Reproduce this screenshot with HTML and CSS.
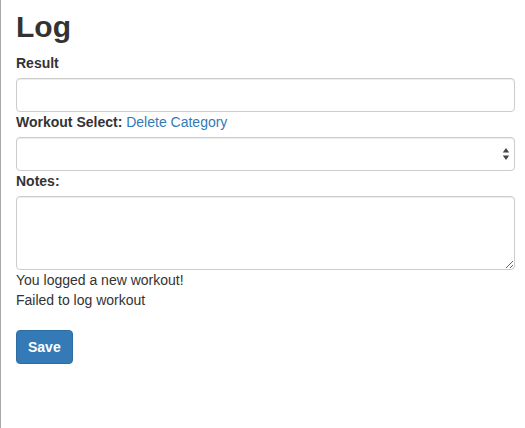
FILE: index.html
```html
<!DOCTYPE html>
<html lang="en">
<head>
<meta charset="utf-8">
<title>Log</title>
<link rel="stylesheet" href="styles.css">
</head>
<body>
  <h1 class="title">Log</h1>
  <form class="log-form">
    <div class="field-label"><label for="result">Result</label></div>
    <input id="result" class="form-control" type="text">
    <div class="field-label"><label for="workout">Workout Select:</label> <a href="#" class="link">Delete Category</a></div>
    <div class="select-wrap">
      <select id="workout" class="form-control select"></select>
      <svg class="select-arrows" width="8" height="14" viewBox="0 0 8 14" aria-hidden="true">
        <path d="M4 1 L7.2 5.6 L0.8 5.6 Z" fill="#444"/>
        <path d="M4 13 L7.2 8.4 L0.8 8.4 Z" fill="#444"/>
      </svg>
    </div>
    <div class="field-label"><label for="notes">Notes:</label></div>
    <textarea id="notes" class="form-control textarea" rows="3"></textarea>
    <div class="message">You logged a new workout!</div>
    <div class="message">Failed to log workout</div>
    <button type="button" class="btn-save">Save</button>
  </form>
</body>
</html>
```

FILE: styles.css
```css
html, body {
  height: 100%;
}
body {
  margin: 0;
  box-sizing: border-box;
  border-left: 1px solid #a8a8a8;
  padding: 0 10px 0 15px;
  font-family: "Liberation Sans", Arial, sans-serif;
  font-size: 14px;
  line-height: 20px;
  color: #333;
  background: #fff;
}
.title {
  margin: 10px 0 10px;
  font-size: 30px;
  line-height: 33px;
  font-weight: 700;
  color: #333;
}
.log-form {
  margin: 0;
}
.field-label {
  margin-bottom: 5px;
  line-height: 20px;
}
.field-label label {
  font-weight: 700;
}
.link {
  color: #337ab7;
  text-decoration: none;
}
.form-control {
  display: block;
  width: 100%;
  height: 34px;
  box-sizing: border-box;
  padding: 6px 12px;
  font-family: inherit;
  font-size: 14px;
  line-height: 20px;
  color: #555;
  background: #fff;
  border: 1px solid #ccc;
  border-radius: 4px;
  box-shadow: inset 0 1px 1px rgba(0, 0, 0, 0.075);
  margin: 0;
}
.select-wrap {
  position: relative;
}
.select {
  -webkit-appearance: none;
  appearance: none;
}
.select-arrows {
  position: absolute;
  right: 5px;
  top: 10px;
  pointer-events: none;
}
.textarea {
  height: 74px;
  resize: vertical;
}
.message {
  line-height: 20px;
}
.btn-save {
  display: block;
  margin-top: 20px;
  padding: 6px 11px;
  font-family: inherit;
  font-size: 14px;
  line-height: 20px;
  font-weight: 700;
  color: #fff;
  background: #337ab7;
  border: 1px solid #2e6da4;
  border-radius: 4px;
}
```
